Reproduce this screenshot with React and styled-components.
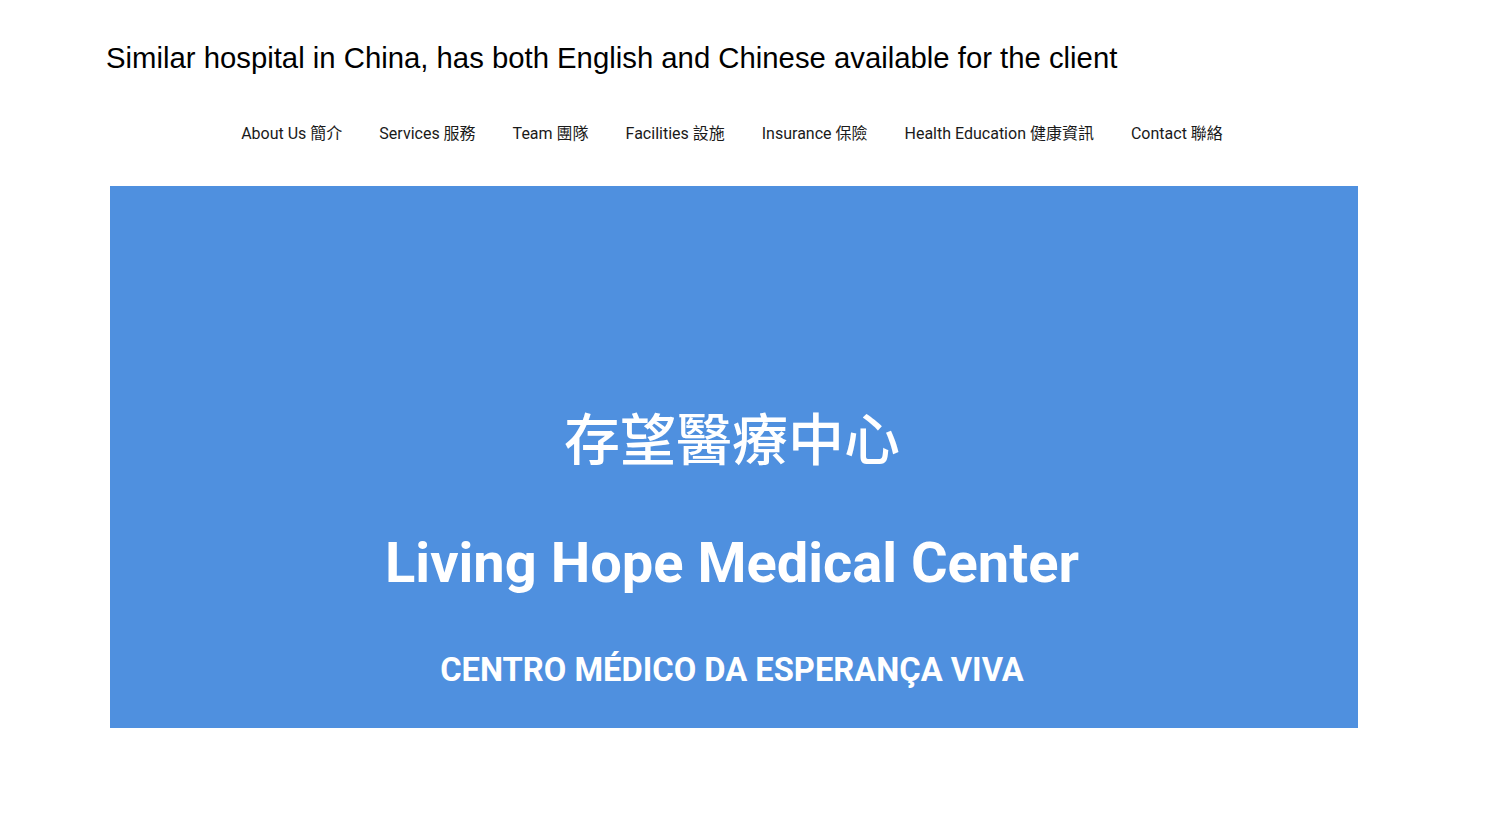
import React from 'react';
import styled, { createGlobalStyle } from 'styled-components';

const GlobalStyle = createGlobalStyle`
  html, body {
    margin: 0;
    padding: 0;
    background: #ffffff;
  }
`;

const Page = styled.div`
  width: 1504px;
  min-height: 820px;
  background: #ffffff;
  padding-top: 40px;
  box-sizing: border-box;
`;

const Note = styled.p`
  margin: 0 0 0 106px;
  font-family: "Liberation Sans", Arial, sans-serif;
  font-size: 29.3px;
  line-height: 36px;
  color: #000000;
`;

const Nav = styled.nav`
  display: flex;
  justify-content: center;
  gap: 37px;
  width: 1248px;
  margin: 46px 0 0 110px;
  padding-right: 4px;
  box-sizing: border-box;
  height: 60px;
  align-items: flex-start;
`;

const NavLink = styled.a`
  font-family: Roboto, "Noto Sans CJK TC", sans-serif;
  font-size: 16px;
  line-height: 24px;
  color: #1a1a1a;
  text-decoration: none;
`;

const Hero = styled.section`
  width: 1248px;
  height: 542px;
  margin: 4px 0 0 110px;
  background: #4f90df;
  display: flex;
  flex-direction: column;
  align-items: center;
  justify-content: flex-end;
  padding: 0 4px 38px 0;
  box-sizing: border-box;
  color: #ffffff;
  font-family: Roboto, "Noto Sans CJK TC", sans-serif;
  font-weight: 700;
`;

const ChineseName = styled.h1`
  margin: 0;
  font-family: "Noto Sans CJK TC", sans-serif;
  font-size: 56px;
  font-weight: 500;
  line-height: 70px;
`;

const EnglishName = styled.h2`
  margin: 57px 0 0;
  font-size: 56px;
  font-weight: 700;
  line-height: 70px;
`;

const PortugueseName = styled.h3`
  margin: 52px 0 0;
  font-size: 32.7px;
  font-weight: 700;
  line-height: 40px;
`;

const links = [
  'About Us 簡介',
  'Services 服務',
  'Team 團隊',
  'Facilities 設施',
  'Insurance 保險',
  'Health Education 健康資訊',
  'Contact 聯絡',
];

export default function App() {
  return (
    <>
      <GlobalStyle />
      <Page>
        <Note>Similar hospital in China, has both English and Chinese available for the client</Note>
        <Nav>
          {links.map((label) => (
            <NavLink key={label} href="#">{label}</NavLink>
          ))}
        </Nav>
        <Hero>
          <ChineseName>存望醫療中心</ChineseName>
          <EnglishName>Living Hope Medical Center</EnglishName>
          <PortugueseName>CENTRO MÉDICO DA ESPERANÇA VIVA</PortugueseName>
        </Hero>
      </Page>
    </>
  );
}
